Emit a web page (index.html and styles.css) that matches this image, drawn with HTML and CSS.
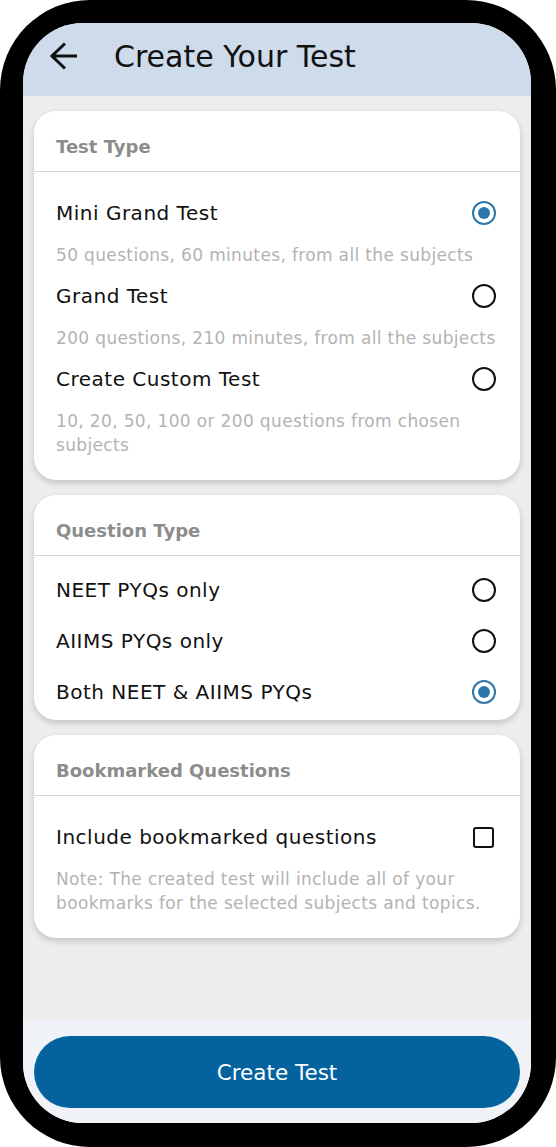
FILE: index.html
```html
<!DOCTYPE html>
<html lang="en">
<head>
  <meta charset="UTF-8">
  <meta name="viewport" content="width=device-width, initial-scale=1.0">
  <title>Create Your Test</title>
  <link rel="stylesheet" href="styles.css">
</head>
<body>
  <div class="phone">
    <div class="screen">
      <header class="app-bar">
        <svg class="back-icon" width="28" height="28" viewBox="0 0 28 28">
          <path d="M15 1.5 L2 14 L15 26.5 M2 14 H27" fill="none" stroke="#111" stroke-width="3"/>
        </svg>
        <h1>Create Your Test</h1>
      </header>

      <main class="content">
        <section class="card">
          <div class="card-header">Test Type</div>
          <div class="card-body">
            <div class="option">
              <div class="option-title">
                <span>Mini Grand Test</span>
                <span class="radio checked"></span>
              </div>
              <div class="option-desc">50 questions, 60 minutes, from all the subjects</div>
            </div>
            <div class="option">
              <div class="option-title">
                <span>Grand Test</span>
                <span class="radio"></span>
              </div>
              <div class="option-desc">200 questions, 210 minutes, from all the subjects</div>
            </div>
            <div class="option">
              <div class="option-title">
                <span>Create Custom Test</span>
                <span class="radio"></span>
              </div>
              <div class="option-desc">10, 20, 50, 100 or 200 questions from chosen subjects</div>
            </div>
          </div>
        </section>

        <section class="card">
          <div class="card-header">Question Type</div>
          <div class="card-body compact">
            <div class="row">
              <span>NEET PYQs only</span>
              <span class="radio"></span>
            </div>
            <div class="row">
              <span>AIIMS PYQs only</span>
              <span class="radio"></span>
            </div>
            <div class="row">
              <span>Both NEET &amp; AIIMS PYQs</span>
              <span class="radio checked"></span>
            </div>
          </div>
        </section>

        <section class="card">
          <div class="card-header">Bookmarked Questions</div>
          <div class="card-body">
            <div class="option">
              <div class="option-title">
                <span>Include bookmarked questions</span>
                <span class="checkbox"></span>
              </div>
              <div class="option-desc">Note: The created test will include all of your bookmarks for the selected subjects and topics.</div>
            </div>
          </div>
        </section>
      </main>

      <footer class="bottom-bar">
        <button type="button">Create Test</button>
      </footer>
    </div>
  </div>
</body>
</html>
```

FILE: styles.css
```css
body {
  margin: 0;
  background-color: #ffffff;
  font-family: "DejaVu Sans", Arial, sans-serif;
}
.phone {
  width: 556px;
  height: 1147px;
  box-sizing: border-box;
  background-color: #000;
  border-radius: 90px;
  padding: 23px 25px 24px 23px;
}
.screen {
  height: 100%;
  background-color: #ededed;
  border-radius: 60px;
  overflow: hidden;
  display: flex;
  flex-direction: column;
}
.app-bar {
  height: 73px;
  box-sizing: border-box;
  flex-shrink: 0;
  background-color: #cddbeb;
  display: flex;
  align-items: center;
  padding: 0 0 7px 27px;
}
.back-icon {
  margin-right: 36px;
}
.app-bar h1 {
  margin: 0;
  font-size: 30px;
  font-weight: 400;
  color: #111;
}
.content {
  flex: 1;
  padding: 15px 11px;
  display: flex;
  flex-direction: column;
  gap: 15px;
}
.card {
  background-color: #fff;
  border-radius: 22px;
  box-shadow: 0 3px 6px rgba(0, 0, 0, 0.18);
}
.card-header {
  padding: 24px 22px 12px;
  line-height: 24px;
  font-size: 18px;
  font-weight: 700;
  color: #8c8c8c;
  border-bottom: 1px solid #d6d6d6;
}
.card-body {
  padding: 20px 22px 15px;
}
.card-body.compact {
  padding: 8px 22px 3px;
}
.option-title,
.row {
  display: flex;
  justify-content: space-between;
  align-items: center;
  height: 42px;
  font-size: 20px;
  letter-spacing: 0.5px;
  color: #111;
}
.row {
  height: 51px;
}
.option-desc {
  padding: 9px 0 8px;
  line-height: 24px;
  font-size: 17px;
  letter-spacing: 0.35px;
  color: #b3b3b3;
}
.radio {
  width: 24px;
  height: 24px;
  box-sizing: border-box;
  border: 2.5px solid #111;
  border-radius: 50%;
  margin-right: 2px;
  display: flex;
  align-items: center;
  justify-content: center;
}
.radio.checked {
  border-color: #2f77aa;
}
.radio.checked::after {
  content: "";
  width: 12px;
  height: 12px;
  border-radius: 50%;
  background-color: #2f77aa;
}
.checkbox {
  width: 21px;
  height: 21px;
  box-sizing: border-box;
  border: 2.5px solid #111;
  border-radius: 3px;
  margin-right: 4px;
}
.bottom-bar {
  background-color: #eff3f7;
  padding: 16px 11px 15px;
}
.bottom-bar button {
  width: 100%;
  height: 72px;
  border: none;
  border-radius: 36px;
  background-color: #04639f;
  color: #fff;
  font-family: inherit;
  font-size: 21.5px;
  font-weight: 400;
}
```
